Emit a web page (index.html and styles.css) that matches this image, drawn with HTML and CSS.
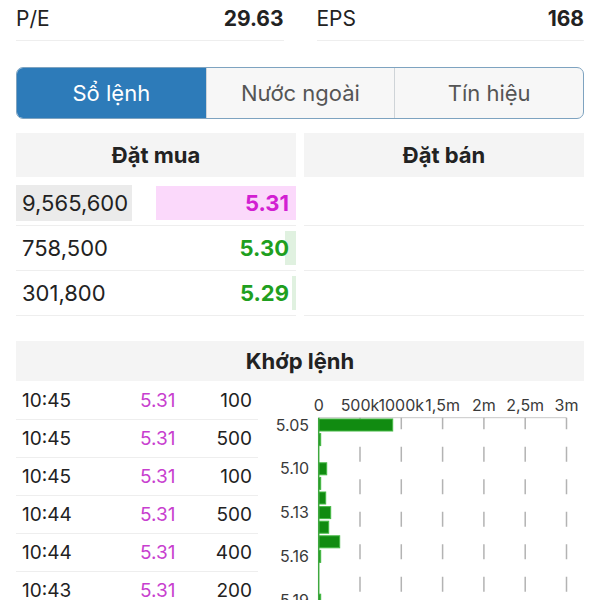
FILE: index.html
```html
<!DOCTYPE html>
<html lang="vi">
<head>
    <meta charset="UTF-8">
    <meta name="viewport" content="width=device-width, initial-scale=1.0">
    <title>Sổ lệnh</title>
    <link rel="stylesheet" href="styles.css">
</head>
<body>

<div class="page">
    <div class="stats">
        <div class="stat"><span>P/E</span><span class="stat-value">29.63</span></div>
        <div class="stat"><span>EPS</span><span class="stat-value">168</span></div>
    </div>

    <div class="tabs">
        <div class="tab active">Sổ lệnh</div>
        <div class="tab">Nước ngoài</div>
        <div class="tab">Tín hiệu</div>
    </div>

    <div class="book">
        <div class="side">
            <div class="side-head">Đặt mua</div>
            <div class="book-rows">
                <div class="book-row">
                    <span class="qty changed">9,565,600</span>
                    <span class="price ceil" style="background-size: 140px 100%">5.31</span>
                </div>
                <div class="book-row">
                    <span class="qty">758,500</span>
                    <span class="price up" style="background-size: 11px 100%">5.30</span>
                </div>
                <div class="book-row">
                    <span class="qty">301,800</span>
                    <span class="price up" style="background-size: 4px 100%">5.29</span>
                </div>
            </div>
        </div>
        <div class="side">
            <div class="side-head">Đặt bán</div>
            <div class="book-rows">
                <div class="book-row"></div>
                <div class="book-row"></div>
                <div class="book-row"></div>
            </div>
        </div>
    </div>

    <div class="match">
        <div class="match-head">Khớp lệnh</div>
        <div class="match-body">
            <div class="trades">
                <div class="trade"><span>10:45</span><span class="trade-price">5.31</span><span class="trade-vol">100</span></div>
                <div class="trade"><span>10:45</span><span class="trade-price">5.31</span><span class="trade-vol">500</span></div>
                <div class="trade"><span>10:45</span><span class="trade-price">5.31</span><span class="trade-vol">100</span></div>
                <div class="trade"><span>10:44</span><span class="trade-price">5.31</span><span class="trade-vol">500</span></div>
                <div class="trade"><span>10:44</span><span class="trade-price">5.31</span><span class="trade-vol">400</span></div>
                <div class="trade"><span>10:43</span><span class="trade-price">5.31</span><span class="trade-vol">200</span></div>
            </div>

            <svg class="chart" width="325" height="230" viewBox="0 0 325 230">
                <!-- x axis labels -->
                <g class="axis-text" text-anchor="middle">
                    <text x="60.7" y="28.5">0</text>
                    <text x="102" y="28.5">500k</text>
                    <text x="143.3" y="28.5">1000k</text>
                    <text x="184.6" y="28.5">1,5m</text>
                    <text x="225.9" y="28.5">2m</text>
                    <text x="267.2" y="28.5">2,5m</text>
                    <text x="308.5" y="28.5">3m</text>
                </g>
                <line x1="60.7" y1="35.7" x2="308.5" y2="35.7" class="axis-line"/>
                <g class="grid">
                    <line x1="102" y1="35.7" x2="102" y2="230"/>
                    <line x1="143.3" y1="35.7" x2="143.3" y2="230"/>
                    <line x1="184.6" y1="35.7" x2="184.6" y2="230"/>
                    <line x1="225.9" y1="35.7" x2="225.9" y2="230"/>
                    <line x1="267.2" y1="35.7" x2="267.2" y2="230"/>
                    <line x1="308.5" y1="35.7" x2="308.5" y2="230"/>
                </g>
                <!-- volume by price -->
                <g class="bars">
                    <rect x="60.7" y="37" width="74" height="12"/>
                    <rect x="60.7" y="51.6" width="2" height="12"/>
                    <rect x="60.7" y="80.8" width="8" height="12"/>
                    <rect x="60.7" y="95.4" width="2" height="12"/>
                    <rect x="60.7" y="110" width="7" height="12"/>
                    <rect x="60.7" y="124.6" width="12" height="12"/>
                    <rect x="60.7" y="139.2" width="10" height="12"/>
                    <rect x="60.7" y="153.8" width="21" height="12"/>
                    <rect x="60.7" y="168.4" width="2" height="12"/>
                    <rect x="60.7" y="212.2" width="2" height="12"/>
                </g>
                <line x1="60.7" y1="35.7" x2="60.7" y2="230" class="zero-line"/>
                <g class="axis-text" text-anchor="end">
                    <text x="51" y="48.5">5.05</text>
                    <text x="51" y="92.3">5.10</text>
                    <text x="51" y="136.1">5.13</text>
                    <text x="51" y="179.9">5.16</text>
                    <text x="51" y="223.7">5.19</text>
                </g>
            </svg>
        </div>
    </div>
</div>

</body>
</html>
```

FILE: styles.css
```css
body {
    margin: 0;
    font-family: Inter, "Noto Sans", "DejaVu Sans", sans-serif;
    color: #222;
    background-color: #fff;
    overflow: hidden;
}
.page {
    padding: 0 16px;
}
.stats {
    display: flex;
    gap: 33px;
}
.stat {
    flex: 1;
    display: flex;
    justify-content: space-between;
    align-items: center;
    height: 41px;
    padding-bottom: 3px;
    box-sizing: border-box;
    border-bottom: 1px solid #eeeeee;
    font-size: 21px;
}
.stat-value {
    font-weight: bold;
}
.tabs {
    display: grid;
    grid-template-columns: 1fr 1fr 1fr;
    margin-top: 26px;
    height: 52px;
    border: 1.5px solid #7ea3c0;
    border-radius: 7px;
    overflow: hidden;
    box-sizing: border-box;
    background-color: #f7f7f7;
}
.tab {
    display: flex;
    align-items: center;
    justify-content: center;
    font-size: 22px;
    color: #555;
}
.tab + .tab {
    border-left: 1px solid #cfd4d8;
}
.tab.active {
    background-color: #2d7bb9;
    color: #fff;
}
.book {
    display: grid;
    grid-template-columns: 1fr 1fr;
    gap: 8px;
    margin-top: 14px;
}
.side-head, .match-head {
    display: flex;
    align-items: center;
    justify-content: center;
    background-color: #f4f4f4;
    font-size: 22px;
    font-weight: bold;
}
.side-head {
    height: 44px;
}
.book-rows {
    margin-top: 4px;
}
.book-row {
    display: flex;
    justify-content: space-between;
    align-items: center;
    height: 45px;
    border-bottom: 1px solid #eeeeee;
    box-sizing: border-box;
    font-size: 22px;
}
.qty {
    padding: 0 6px;
    height: 36px;
    line-height: 36px;
    width: 104px;
}
.qty.changed {
    background-color: #ebebeb;
}
.price {
    width: 140px;
    height: 34px;
    line-height: 34px;
    padding-right: 7px;
    box-sizing: border-box;
    text-align: right;
    font-weight: bold;
    background-repeat: no-repeat;
    background-position: right center;
}
.price.ceil {
    color: #d21fd2;
    background-image: linear-gradient(#fbd9fb, #fbd9fb);
}
.price.up {
    color: #1f9f1f;
    background-image: linear-gradient(#e0f1e0, #e0f1e0);
}
.match {
    margin-top: 25px;
}
.match-head {
    height: 40px;
}
.match-body {
    display: flex;
    margin-top: 1px;
}
.trades {
    width: 242px;
    flex-shrink: 0;
}
.trade {
    display: grid;
    grid-template-columns: 118px 70px 1fr;
    align-items: center;
    height: 38px;
    padding: 0 6px;
    border-bottom: 1px solid #eeeeee;
    box-sizing: border-box;
    font-size: 19px;
}
.trade-price {
    color: #c83fcf;
}
.trade-vol {
    text-align: right;
}
.chart {
    display: block;
    flex-shrink: 0;
}
.axis-text {
    font-family: Inter, "Noto Sans", sans-serif;
    font-size: 16px;
    fill: #3a3a3a;
}
.axis-line {
    stroke: #c8c8c8;
    stroke-width: 1;
}
.grid line {
    stroke: #b3b3b3;
    stroke-width: 1.5;
    stroke-dasharray: 15 17.5;
    stroke-dashoffset: 3.5;
}
.bars rect {
    fill: #118b11;
    stroke: #45b945;
    stroke-width: 1;
}
.zero-line {
    stroke: #3fa83f;
    stroke-width: 1.5;
}
```
